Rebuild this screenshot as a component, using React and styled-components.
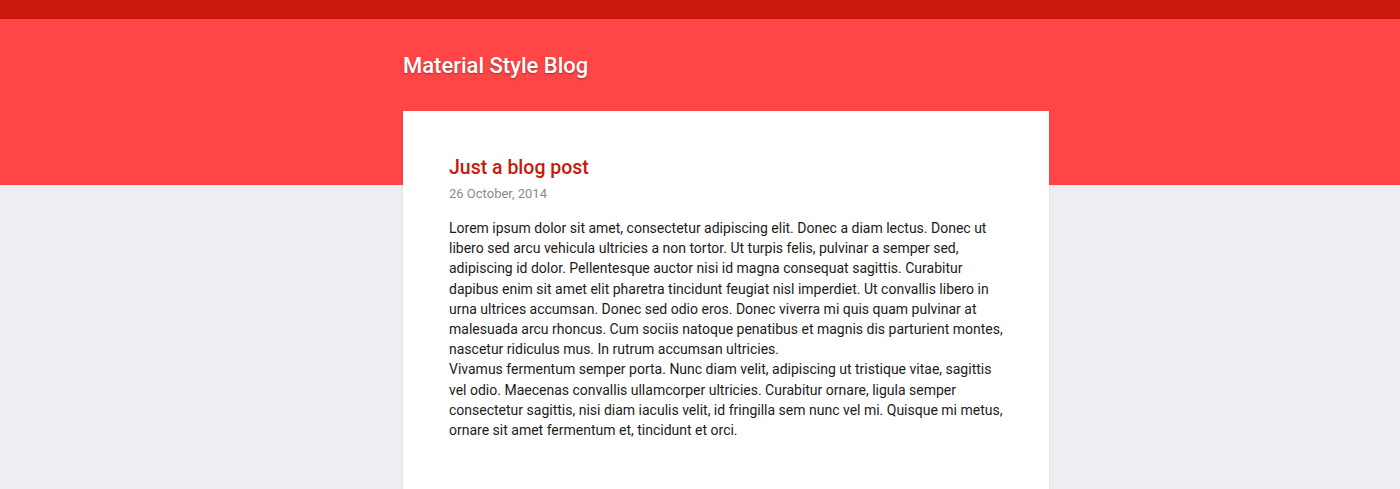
import React from "react";
import styled, { createGlobalStyle } from "styled-components";

const GlobalStyle = createGlobalStyle`
  html, body {
    margin: 0;
    padding: 0;
    background: #eeeef2;
    font-family: Roboto, "Liberation Sans", sans-serif;
  }
`;

const TopBar = styled.div`
  height: 19px;
  background: #c8190b;
`;

const Header = styled.header`
  background: #ff4545;
  height: 166px;
`;

const Container = styled.div`
  width: 646px;
  margin: 0 auto;
  position: relative;
  left: 26px;
`;

const BlogTitle = styled.h1`
  margin: 0;
  padding-top: 34px;
  font-size: 22px;
  font-weight: 500;
  line-height: 26px;
  color: #fff;
  text-shadow: 0 1px 2px rgba(0, 0, 0, 0.35);
`;

const Main = styled.main`
  margin-top: -74px;
`;

const Card = styled.article`
  background: #fff;
  padding: 45px 46px 60px;
  box-shadow: 0 1px 2px rgba(0, 0, 0, 0.15);
`;

const PostTitle = styled.h2`
  margin: 0;
  font-size: 19.5px;
  font-weight: 500;
  line-height: 24px;
  color: #c8190b;
`;

const PostDate = styled.div`
  margin-top: 6px;
  font-size: 13px;
  line-height: 16px;
  color: #8f8a8a;
`;

const Body = styled.p`
  margin: ${(p) => (p.$first ? "16px" : "0")} 0 0;
  font-size: 14px;
  line-height: 20.2px;
  color: #231a1a;
`;

export default function App() {
  return (
    <>
      <GlobalStyle />
      <TopBar />
      <Header>
        <Container>
          <BlogTitle>Material Style Blog</BlogTitle>
        </Container>
      </Header>
      <Main>
        <Container>
          <Card>
            <PostTitle>Just a blog post</PostTitle>
            <PostDate>26 October, 2014</PostDate>
            <Body $first>
              Lorem ipsum dolor sit amet, consectetur adipiscing elit. Donec a diam lectus. Donec ut
              libero sed arcu vehicula ultricies a non tortor. Ut turpis felis, pulvinar a semper sed,
              adipiscing id dolor. Pellentesque auctor nisi id magna consequat sagittis. Curabitur
              dapibus enim sit amet elit pharetra tincidunt feugiat nisl imperdiet. Ut convallis libero in
              urna ultrices accumsan. Donec sed odio eros. Donec viverra mi quis quam pulvinar at
              malesuada arcu rhoncus. Cum sociis natoque penatibus et magnis dis parturient montes,
              nascetur ridiculus mus. In rutrum accumsan ultricies.
            </Body>
            <Body>
              Vivamus fermentum semper porta. Nunc diam velit, adipiscing ut tristique vitae, sagittis
              vel odio. Maecenas convallis ullamcorper ultricies. Curabitur ornare, ligula semper
              consectetur sagittis, nisi diam iaculis velit, id fringilla sem nunc vel mi. Quisque mi metus,
              ornare sit amet fermentum et, tincidunt et orci.
            </Body>
          </Card>
        </Container>
      </Main>
    </>
  );
}
